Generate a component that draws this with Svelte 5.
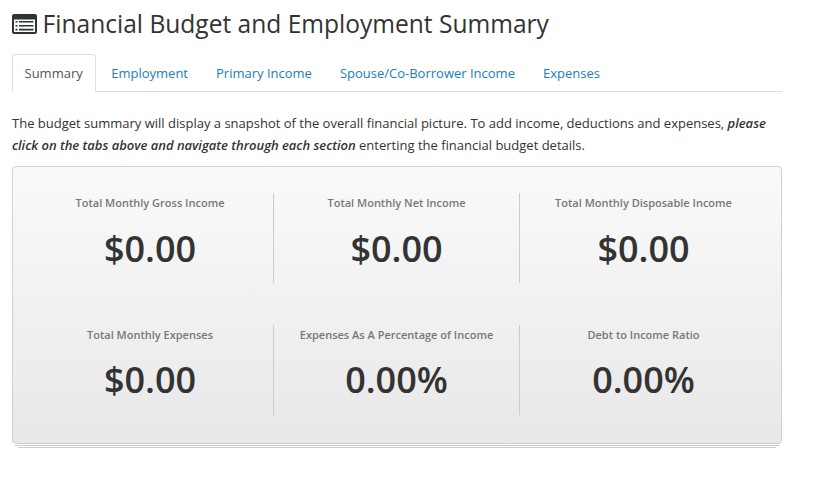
<script>
  const tabs = ['Summary', 'Employment', 'Primary Income', 'Spouse/Co-Borrower Income', 'Expenses'];
  const rows = [
    [['Total Monthly Gross Income', '$0.00'], ['Total Monthly Net Income', '$0.00'], ['Total Monthly Disposable Income', '$0.00']],
    [['Total Monthly Expenses', '$0.00'], ['Expenses As A Percentage of Income', '0.00%'], ['Debt to Income Ratio', '0.00%']]
  ];
</script>

<main>
  <h1>
    <svg width="25" height="20" viewBox="0 0 25 20" aria-hidden="true">
      <path fill="#2f3336" fill-rule="evenodd" d="M2 0H23Q25 0 25 2V18Q25 20 23 20H2Q0 20 0 18V2Q0 0 2 0ZM2 5.5V17.5Q2 18 2.5 18H22.5Q23 18 23 17.5V5.5Z" />
      <path fill="#2f3336" d="M3.5 7h2v1.6h-2zM7 7h14.5v1.6H7zM3.5 11h2v1.6h-2zM7 11h14.5v1.6H7zM3.5 14.8h2v1.6h-2zM7 14.8h14.5v1.6H7z" />
    </svg>
    <span>Financial Budget and Employment Summary</span>
  </h1>
  <nav>
    {#each tabs as tab, i}
      <a class:active={i === 0}>{tab}</a>
    {/each}
  </nav>
  <p>The budget summary will display a snapshot of the overall financial picture. To add income, deductions and expenses, <b>please<br />click on the tabs above and navigate through each section</b> enterting the financial budget details.</p>
  <section>
    {#each rows as row}
      <div class="row">
        {#each row as [label, value]}
          <div class="stat">
            <h2>{label}</h2>
            <strong>{value}</strong>
          </div>
        {/each}
      </div>
    {/each}
  </section>
  <div class="sheet"></div>
  <div class="sheet last"></div>
</main>

<style>
  :global(body) { background: #fff; }
  main { width: 770px; padding: 0 12px; font: 13px/22px 'Open Sans', sans-serif; color: #333; }
  h1 { display: flex; align-items: center; gap: 5.6px; height: 47px; margin: 0 0 7px; font-size: 24.55px; font-weight: 400; line-height: 47px; white-space: nowrap; }
  svg { flex: none; }
  nav { display: flex; height: 37px; border-bottom: 1px solid #ddd; }
  a { box-sizing: border-box; height: 38px; padding: 8px 12px; margin-right: 2px; border: 1px solid transparent; line-height: 21px; color: #1c80b8; white-space: nowrap; }
  a.active { padding: 8px 12.5px 8px 11.5px; border-color: #ddd #ddd #fff; border-radius: 4px 4px 0 0; color: #555; background: #fff; }
  p { margin: 20px 0 10px; white-space: nowrap; }
  b { font-style: italic; font-weight: 600; letter-spacing: -0.02px; }
  section {
    box-sizing: border-box; height: 278px; padding: 26px 14px 0; border: 1px solid #d0d0d0; border-radius: 4px;
    background: linear-gradient(#fafafa, #e8e8e8);
  }
  .row { display: flex; height: 90px; margin-bottom: 42px; }
  .stat { box-sizing: border-box; flex: none; width: 246px; text-align: center; border-right: 1px solid #ccc; }
  .stat:first-child { width: 247px; }
  .stat:last-child { width: 247px; border: 0; }
  h2 { margin: 0; font-size: 11px; line-height: 20px; font-weight: 600; color: #777; white-space: nowrap; }
  strong { display: block; margin-top: 11px; font-size: 36px; line-height: 50px; font-weight: 600; }
  .row:last-child strong { margin-top: 10px; }
  .sheet { height: 1px; margin: 0 3px; border-bottom: 1px solid #ccc; background: #fff; }
  .sheet.last { margin: 0 6px; }
</style>
